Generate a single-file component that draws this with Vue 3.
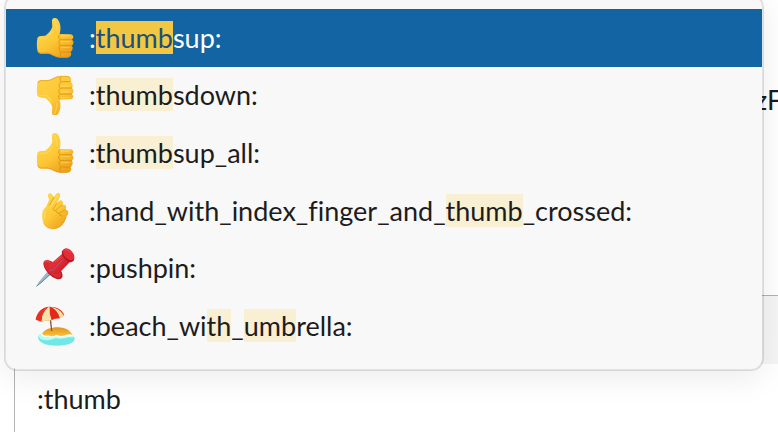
<template>
  <div class="app">
    <div class="message">zF</div>
    <div class="composer">
      <div class="composer-toolbar"></div>
      <div class="composer-input">:thumb</div>
    </div>

    <ul class="emoji-menu">
      <li
        v-for="(item, index) in items"
        :key="index"
        class="emoji-item"
        :class="{ selected: index === selected }"
      >
        <svg class="emoji" :viewBox="item.viewBox" aria-hidden="true">
          <g v-if="item.icon === 'up' || item.icon === 'down'" :transform="item.icon === 'down' ? 'translate(0 167) scale(1 -1)' : null">
            <path :fill="item.icon === 'down' ? 'url(#skin-down)' : 'url(#skin)'" d="M37 86Q38 79 48 78L61 77C67 72 77 63 81 53C83 46 79 34 82 28C85 22 95 23 99 29C106 40 109 52 104 72L138 73Q146 75 145 82Q144 87 140 89Q147 92 145 100Q144 105 140 107Q145 111 142 119Q140 124 136 126Q141 131 137 137Q134 143 124 143H107C90 143 82 132 68 131H47Q38 130 37 120C35 108 35 96 37 86Z" />
            <path fill="none" stroke="#ffe06b" stroke-width="4" stroke-linecap="round" opacity=".5" d="M89 31Q96 42 96 60M45 85H63Q76 76 82 65M109 78H133M110 95H134M109 112H133" />
            <path fill="none" stroke="#d9870c" stroke-width="3" stroke-linecap="round" opacity=".7" d="M104 74Q99 78 101 84Q104 89 111 89H140M104 90Q99 95 102 102Q104 107 111 107H140M104 108Q99 114 104 121Q107 126 113 126H136M106 127Q103 133 107 139" />
            <path fill="none" stroke="#d98c12" stroke-width="3" opacity=".5" d="M38 121Q40 128 48 129H68C82 130 90 141 107 142H124Q134 142 137 136" />
          </g>

          <g v-else-if="item.icon === 'crossed'">
            <path fill="url(#skin)" d="M52 94C52 84 59 78 65 70L73 51C67 44 67 36 73 33Q79 32 83 38L87 45C91 38 95 30 101 31Q107 34 105 41C103 49 98 57 94 64L101 56Q107 52 112 56Q117 61 112 68Q120 65 123 71Q125 76 121 82Q129 82 130 88Q131 94 125 102C121 119 108 139 88 140C72 141 59 133 55 120C52 111 51 102 52 94Z" />
            <path fill="none" stroke="#ffe472" stroke-width="4" stroke-linecap="round" opacity=".6" d="M99 37L77 74M61 88Q56 98 59 110" />
            <path fill="none" stroke="#d1870d" stroke-width="2.5" stroke-linecap="round" opacity=".7" d="M87 45L73 69M95 64L84 81Q86 87 92 84L101 76L112 68M92 84Q94 94 102 93L121 82M102 93Q103 102 111 101" />
            <path fill="none" stroke="#dc9517" stroke-width="3" opacity=".4" d="M122 104C117 124 106 137 88 139C71 141 60 132 56 122" />
          </g>

          <g v-else-if="item.icon === 'pin'">
            <path fill="url(#steel)" d="M69 93L79 102L45 132L33 141L41 128Z" />
            <path fill="none" stroke="#466b80" stroke-width="2" d="M79 101L47 130L34 140" />
            <ellipse cx="84" cy="90" rx="36" ry="18" transform="rotate(45 84 90)" fill="#b91c25" />
            <ellipse cx="82" cy="88" rx="34" ry="15" transform="rotate(45 82 88)" fill="#d92a32" />
            <path fill="url(#red)" d="M74 75L112 42Q129 44 137 65L108 95Q96 108 83 99Q70 91 74 75Z" />
            <path fill="none" stroke="#a65780" stroke-width="4" opacity=".7" d="M72 92Q84 94 90 86L112 61" />
            <ellipse cx="129" cy="48" rx="23" ry="14" transform="rotate(48 129 48)" fill="#b51522" />
            <ellipse cx="131" cy="44" rx="21" ry="13" transform="rotate(48 131 44)" fill="#e22e37" />
            <path fill="none" stroke="#ff6a63" stroke-width="3" stroke-linecap="round" opacity=".5" d="M59 66Q66 61 75 69M122 30Q130 28 136 37M92 65L108 51" />
          </g>

          <g v-else>
            <path fill="#71e7e8" d="M39 117Q41 107 54 106L135 109Q149 113 149 122Q147 140 96 142Q43 142 39 117Z" />
            <path fill="#b1fff5" d="M41 112Q42 124 61 125Q77 127 92 120Q111 124 132 117Q147 119 148 114Q137 108 128 111L53 103Z" />
            <path fill="#fffced" d="M46 108Q52 118 69 115Q80 121 93 114Q108 121 122 114Q134 115 145 113L136 107L60 98Z" />
            <path fill="url(#sand)" d="M51 107C57 93 78 87 99 87Q129 87 143 109Q130 106 122 110Q108 116 94 109Q82 117 70 111Q59 114 51 107Z" />
            <path fill="none" stroke="#925326" stroke-width="4" d="M76 61L80 98" />
            <path fill="#e63225" d="M32 64C35 42 51 25 74 25C96 25 113 35 118 51L104 60Q92 58 78 66Q63 65 46 71Q38 65 32 64Z" />
            <path fill="#f6e3aa" d="M72 25Q50 34 40 68L46 71Q61 66 76 66Q63 43 72 25Z" />
            <path fill="#e63225" d="M72 25Q47 34 38 66L50 70Q49 43 72 25Z" />
            <path fill="#f2dea0" d="M75 25Q96 32 104 60Q111 58 117 52Q103 28 75 25Z" />
            <path fill="#f6e3aa" d="M72 25Q50 44 50 69Q63 65 77 66Q88 59 96 59Q91 36 72 25Z" />
            <path fill="#e5281e" d="M74 25Q72 46 80 65Q91 58 104 60Q99 36 74 25Z" />
          </g>
        </svg>
        <span class="emoji-name"><template v-for="(part, i) in item.parts" :key="i"><mark v-if="i % 2">{{ part }}</mark><template v-else>{{ part }}</template></template></span>
      </li>
    </ul>

    <svg class="paint-defs" aria-hidden="true">
      <defs>
        <linearGradient id="skin" x2="0.7" y2="1">
          <stop stop-color="#ffdc57" />
          <stop offset=".6" stop-color="#fcc735" />
          <stop offset="1" stop-color="#eea21c" />
        </linearGradient>
        <linearGradient id="skin-down" x1="0" y1="1" x2="0.7" y2="0">
          <stop stop-color="#ffd34a" />
          <stop offset=".6" stop-color="#fcc735" />
          <stop offset="1" stop-color="#f0aa22" />
        </linearGradient>
        <linearGradient id="red" x2="1" y2="1">
          <stop stop-color="#ed3c3d" />
          <stop offset=".55" stop-color="#dd2731" />
          <stop offset="1" stop-color="#a9121e" />
        </linearGradient>
        <linearGradient id="steel" x2="1" y2="1">
          <stop stop-color="#c7e5ef" />
          <stop offset="1" stop-color="#658898" />
        </linearGradient>
        <linearGradient id="sand" x2="0" y2="1">
          <stop stop-color="#dc9422" />
          <stop offset="1" stop-color="#ffc13d" />
        </linearGradient>
      </defs>
    </svg>
  </div>
</template>

<script setup>
import { ref } from 'vue';

const selected = ref(0);

// Odd entries in parts are the matched text
const items = [
  { icon: 'up', viewBox: '30 24 120 120', parts: [':', 'thumb', 'sup:'] },
  { icon: 'down', viewBox: '30 21 120 120', parts: [':', 'thumb', 'sdown:'] },
  { icon: 'up', viewBox: '30 24 120 120', parts: [':', 'thumb', 'sup_all:'] },
  { icon: 'crossed', viewBox: '30 26 120 120', parts: [':hand_with_index_finger_and_', 'thumb', '_crossed:'] },
  { icon: 'pin', viewBox: '30 25 120 120', parts: [':pushpin:'] },
  { icon: 'beach', viewBox: '30 23 120 120', parts: [':beach_wi', 'th', '_', 'umb', 'rella:'] },
];
</script>

<style>
body {
  overflow: hidden;
}
</style>

<style scoped>
.app {
  position: relative;
  box-sizing: border-box;
  height: 432px;
  overflow: hidden;
  display: flex;
  flex-direction: column;
  background: #fff;
  color: #1d1c1d;
  font-family: Lato, sans-serif;
  font-size: 27px;
  font-variant-ligatures: none;
  line-height: 33px;
}

.message {
  box-sizing: border-box;
  flex: none;
  height: 295px;
  padding: 83px 0 0 755px;
  white-space: nowrap;
}

.composer {
  flex: 1;
  margin-left: 14px;
  border-top: 1px solid #b3b3b3;
  border-left: 1px solid #b3b3b3;
}

.composer-toolbar {
  height: 68px;
  background: #f5f5f5;
}

.composer-input {
  padding: 18px 22px;
}

.emoji-menu {
  position: absolute;
  top: -6px;
  left: 4px;
  box-sizing: border-box;
  width: 760px;
  height: 377px;
  margin: 0;
  padding: 13px 0;
  list-style: none;
  background: #f8f8f8;
  background-clip: padding-box;
  border: 2px solid rgba(29, 28, 29, 0.13);
  border-radius: 13px;
  box-shadow: 0 7px 32px rgba(0, 0, 0, 0.08);
}

.emoji-item {
  display: flex;
  align-items: center;
  gap: 14px;
  height: 57.6px;
  padding-left: 29px;
}

.emoji-item.selected {
  background: #1264a3;
  color: #fff;
}

.emoji {
  flex: none;
  width: 40px;
  height: 40px;
}

.emoji-name {
  padding-bottom: 1px;
  white-space: nowrap;
}

mark {
  display: inline-block;
  background: #f9efd3;
  color: inherit;
}

.selected mark {
  background: #f2c744;
  color: #1b4f7d;
}

.paint-defs {
  position: absolute;
  width: 0;
  height: 0;
}
</style>
